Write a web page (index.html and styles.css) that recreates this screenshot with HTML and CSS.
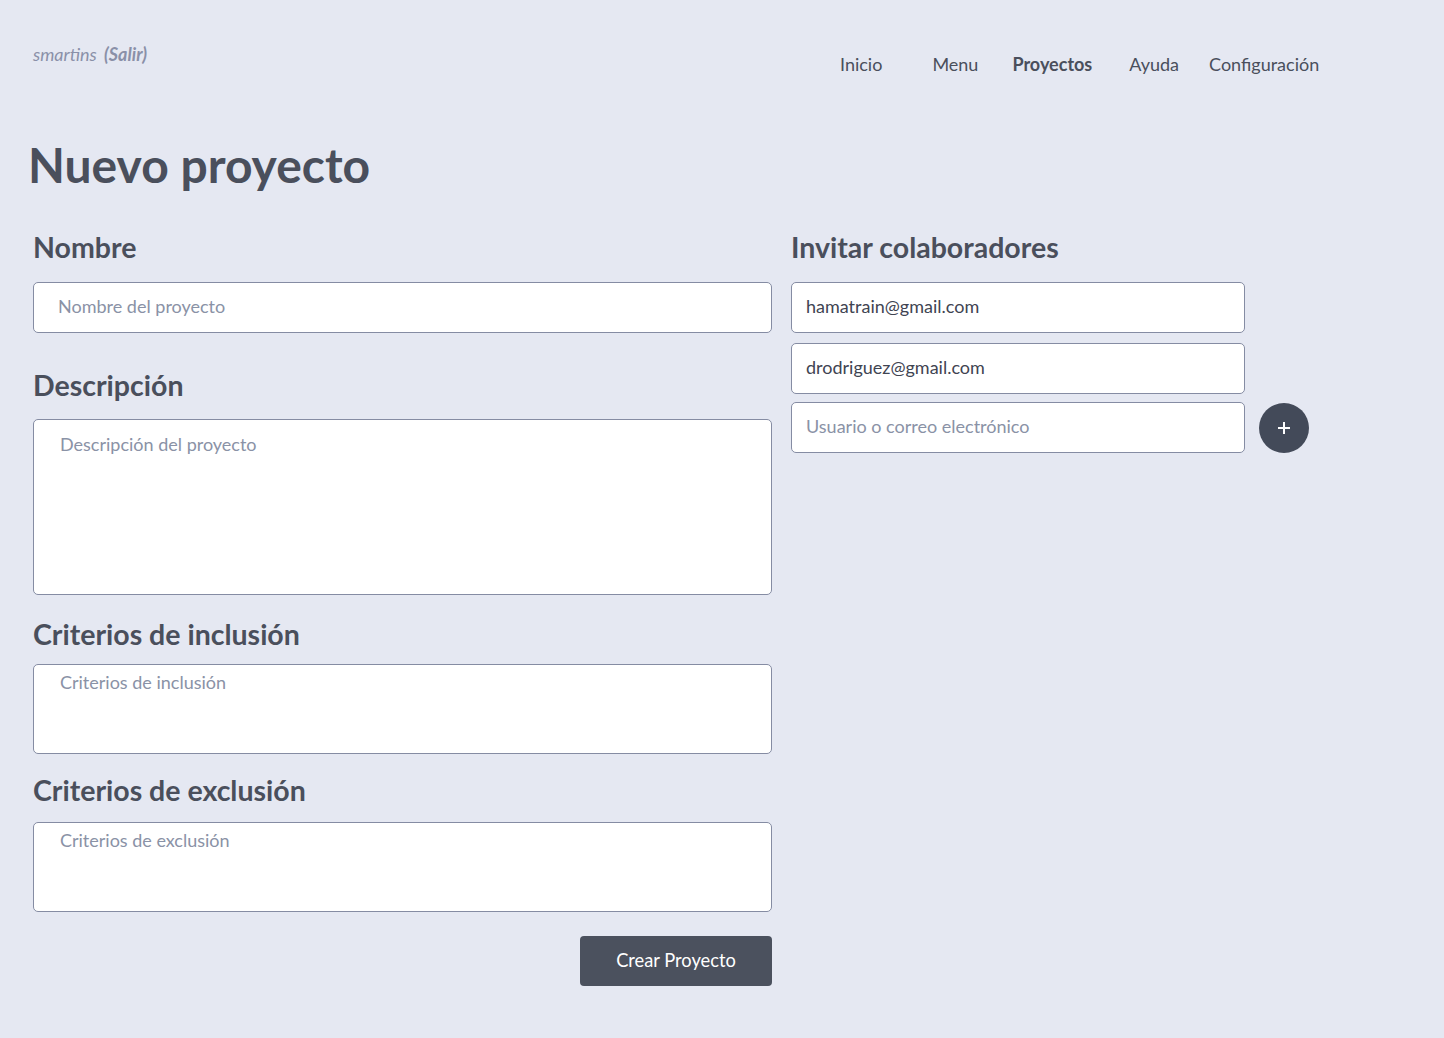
FILE: index.html
```html
<!DOCTYPE html>
<html lang="es">
<head>
<meta charset="utf-8">
<title>Nuevo proyecto</title>
<link rel="stylesheet" href="styles.css">
</head>
<body>
<header class="topbar">
  <div class="user"><span class="user-name">smartins</span> <a class="user-exit" href="#">(Salir)</a></div>
  <nav class="nav">
    <a class="nav-item nav-first" href="#">Inicio</a>
    <a class="nav-item nav-menu" href="#">Menu</a>
    <a class="nav-item nav-active" href="#">Proyectos</a>
    <a class="nav-item nav-help" href="#">Ayuda</a>
    <a class="nav-item" href="#">Configuración</a>
  </nav>
</header>
<main class="page">
  <h1 class="title">Nuevo proyecto</h1>
  <div class="columns">
    <section class="col-left">
      <h2 class="label label-name">Nombre</h2>
      <input class="field" type="text" placeholder="Nombre del proyecto">
      <h2 class="label label-desc">Descripción</h2>
      <textarea class="area area-desc" placeholder="Descripción del proyecto"></textarea>
      <h2 class="label label-inc">Criterios de inclusión</h2>
      <textarea class="area area-small" placeholder="Criterios de inclusión"></textarea>
      <h2 class="label label-exc">Criterios de exclusión</h2>
      <textarea class="area area-small" placeholder="Criterios de exclusión"></textarea>
      <div class="actions"><button class="btn-create" type="button">Crear Proyecto</button></div>
    </section>
    <section class="col-right">
      <h2 class="label label-name">Invitar colaboradores</h2>
      <div class="invite-list">
        <input class="field field-invite" type="text" value="hamatrain@gmail.com">
        <input class="field field-invite" type="text" value="drodriguez@gmail.com">
        <div class="invite-row">
          <input class="field field-invite field-last" type="text" placeholder="Usuario o correo electrónico">
          <button class="btn-add" type="button" aria-label="Agregar">
            <svg width="14" height="14" viewBox="0 0 14 14"><path d="M7 1v12M1 7h12" stroke="#fff" stroke-width="2"/></svg>
          </button>
        </div>
      </div>
    </section>
  </div>
</main>
</body>
</html>
```
FILE: styles.css
```css
* { box-sizing: border-box; }
html, body { margin: 0; padding: 0; }
body {
  background: #e5e8f2;
  font-family: Lato, "Open Sans", sans-serif;
  color: #4a4f5c;
  min-height: 1038px;
}
a { text-decoration: none; color: inherit; }

.topbar {
  display: flex;
  align-items: flex-start;
  padding: 43px 0 0 33px;
  height: 135px;
}
.user {
  font-style: italic;
  font-size: 18px;
  color: #8a90a8;
  width: 807px;
}
.user-exit { font-weight: 700; margin-left: 3px; }
.nav {
  display: flex;
  margin-top: 10px;
  font-size: 18px;
  color: #4a4f5c;
}
.nav-item { margin-right: 37px; }
.nav-first { margin-right: 50px; }
.nav-menu { margin-right: 34px; }
.nav-help { margin-right: 30px; }
.nav-active { font-weight: 700; }

.page { padding: 0 0 0 33px; }
.title {
  margin: 0 0 0 -5px;
  font-size: 48px;
  font-weight: 700;
  line-height: 60px;
  color: #4a4f5c;
}
.columns {
  display: flex;
  gap: 19px;
  margin-top: 34px;
}
.col-left { width: 739px; display: flex; flex-direction: column; }
.col-right { width: 520px; display: flex; flex-direction: column; }
.label {
  margin: 0;
  font-size: 28.5px;
  font-weight: 700;
  line-height: 36px;
  color: #4a4f5c;
}
.label-name { margin-bottom: 17px; }
.label-desc { margin-top: 34px; margin-bottom: 16px; }
.label-inc { margin-top: 21px; margin-bottom: 12px; }
.label-exc { margin-top: 18px; margin-bottom: 14px; }

.field, .area {
  display: block;
  width: 100%;
  background: #fff;
  border: 1px solid #858ca3;
  border-radius: 5px;
  font-family: Lato, "Open Sans", sans-serif;
  font-size: 18px;
  color: #3f4452;
  outline: none;
}
.field { height: 51px; padding: 0 24px 3px; }
.field::placeholder, .area::placeholder { color: #8a92a6; opacity: 1; }
.area { resize: none; padding: 12px 26px; line-height: 24px; }
.area-desc { height: 176px; }
.area-small { height: 90px; padding-top: 5px; }

.actions { display: flex; justify-content: flex-end; margin-top: 24px; }
.btn-create {
  width: 192px;
  height: 50px;
  border: none;
  border-radius: 4px;
  background: #4b515e;
  color: #fff;
  font-family: Lato, "Open Sans", sans-serif;
  font-size: 18.3px;
  padding: 0 0 3px;
}

.invite-list { display: flex; flex-direction: column; gap: 10px; }
.field-invite { width: 454px; padding: 0 14px 3px; }
.invite-list .field-invite:nth-child(2) { margin-bottom: -2px; }
.invite-row { display: flex; align-items: center; gap: 14px; }
.btn-add {
  width: 50px;
  height: 50px;
  border-radius: 50%;
  border: none;
  background: #434a59;
  display: flex;
  align-items: center;
  justify-content: center;
  padding: 0;
  margin-top: 1px;
}
```
